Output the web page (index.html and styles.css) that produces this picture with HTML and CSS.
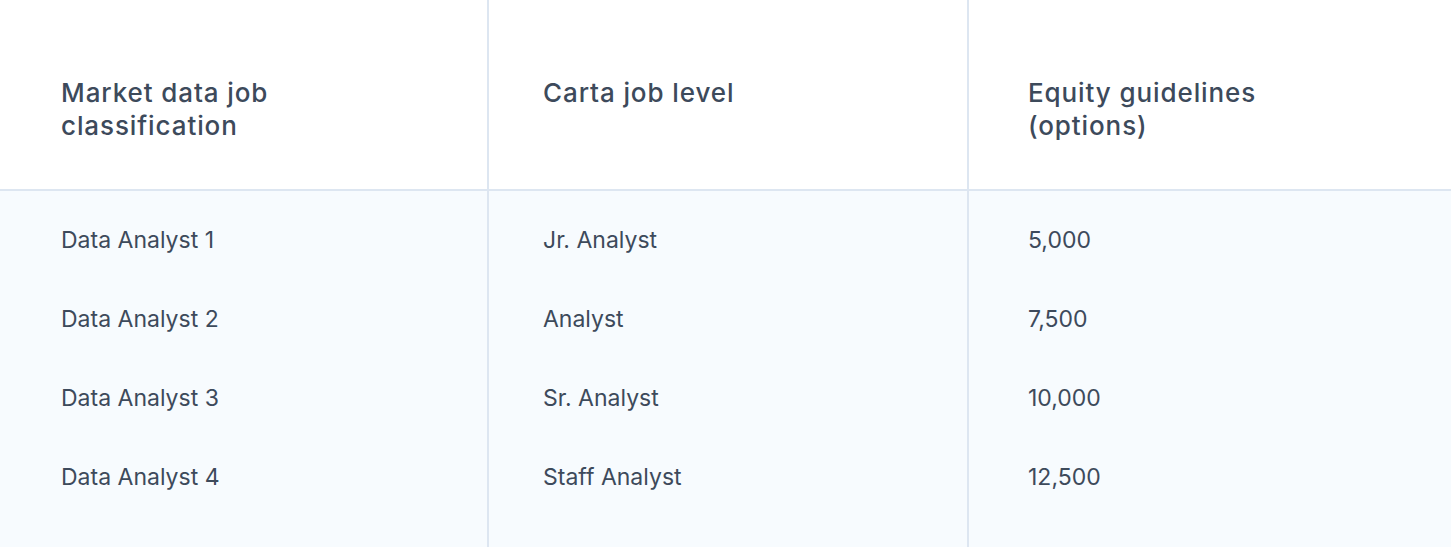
FILE: index.html
```html
<!DOCTYPE html>
<html>
<head>
<meta charset="utf-8">
<link rel="stylesheet" href="styles.css">
</head>
<body>
<div class="table">
  <div class="col col-1">
    <div class="head">Market data job<br>classification</div>
    <div class="rows">
      <div class="cell">Data Analyst 1</div>
      <div class="cell">Data Analyst 2</div>
      <div class="cell">Data Analyst 3</div>
      <div class="cell">Data Analyst 4</div>
    </div>
  </div>
  <div class="col col-2">
    <div class="head">Carta job level</div>
    <div class="rows">
      <div class="cell">Jr. Analyst</div>
      <div class="cell">Analyst</div>
      <div class="cell">Sr. Analyst</div>
      <div class="cell">Staff Analyst</div>
    </div>
  </div>
  <div class="col col-3">
    <div class="head">Equity guidelines<br>(options)</div>
    <div class="rows">
      <div class="cell">5,000</div>
      <div class="cell">7,500</div>
      <div class="cell">10,000</div>
      <div class="cell">12,500</div>
    </div>
  </div>
</div>
</body>
</html>
```
FILE: styles.css
```css
html, body {
  margin: 0;
  padding: 0;
  background: #ffffff;
}
body {
  font-family: Inter, "Noto Sans", sans-serif;
  color: #3d4a5b;
  width: 1451px;
  height: 547px;
  overflow: hidden;
}
.table {
  display: grid;
  grid-template-columns: 489px 480px 1fr;
  height: 547px;
}
.col {
  display: flex;
  flex-direction: column;
}
.col-1, .col-2 {
  border-right: 2px solid #dde6f1;
}
.col-1 { width: 487px; }
.col-2 { width: 478px; }
.head {
  box-sizing: border-box;
  border-bottom: 2px solid #dde6f1;
  height: 191px;
  padding-top: 76px;
  font-size: 26px;
  font-weight: 500;
  line-height: 33px;
  letter-spacing: 0.9px;
}
.rows {
  flex: 1;
  background: #f7fbfe;
  padding-top: 10px;
}
.cell {
  font-size: 23px;
  line-height: 79px;
  height: 79px;
}
.col-1 .head, .col-1 .cell { padding-left: 61px; }
.col-2 .head, .col-2 .cell { padding-left: 54px; }
.col-3 .head, .col-3 .cell { padding-left: 59px; }
```
